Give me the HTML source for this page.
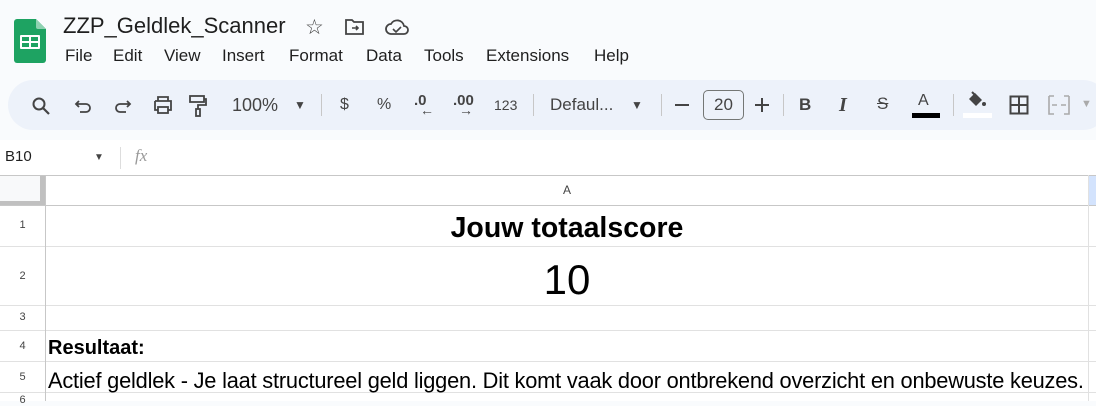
<!DOCTYPE html>
<html><head><meta charset="utf-8"><style>
*{margin:0;padding:0;box-sizing:border-box}
body{width:1096px;height:401px;overflow:hidden;background:#f9fbfd;font-family:"Liberation Sans",Arial,sans-serif;position:relative;color:#1f1f1f}
.abs{position:absolute}
.tb{position:absolute;left:8px;top:80px;width:1100px;height:50px;background:#edf2fa;border-radius:25px}
.ic{position:absolute;top:93px}
.sep{position:absolute;top:94px;width:1px;height:22px;background:#c7c7c7}
.t{position:absolute;font-size:16px;color:#444}
.grid{position:absolute;left:0;top:175px;width:1096px;height:226px;background:#fff}
.h{position:absolute;background:#e1e1e1;height:1px;left:0;width:1096px}
.rn{position:absolute;left:0;width:45px;text-align:center;font-size:11px;color:#444}
.cell{position:absolute;left:48px;font-family:"Liberation Sans",sans-serif;color:#000}
</style></head><body>
<svg class="abs" style="left:14px;top:19px" width="32" height="44" viewBox="0 0 32 44">
<path d="M3 0h19l10 10v31a3 3 0 0 1-3 3H3a3 3 0 0 1-3-3V3a3 3 0 0 1 3-3z" fill="#1ea362"/>
<path d="M22 0v8a2 2 0 0 0 2 2h8z" fill="#8ed1b1"/>
<rect x="6" y="16" width="20" height="14" rx="1" fill="#fff"/>
<rect x="8" y="18" width="7" height="4" fill="#1ea362"/><rect x="17" y="18" width="7" height="4" fill="#1ea362"/>
<rect x="8" y="24" width="7" height="4" fill="#1ea362"/><rect x="17" y="24" width="7" height="4" fill="#1ea362"/>
</svg>
<div class="abs" style="left:63px;top:13px;font-size:22px;color:#1f1f1f">ZZP_Geldlek_Scanner</div>
<div class="abs" style="left:305px;top:15px;font-size:21px;color:#444">☆</div>
<svg class="abs" style="left:345px;top:19px" width="20" height="16" viewBox="0 0 20 16"><path d="M1 1h6l2 2h9v12H1z" fill="none" stroke="#444" stroke-width="1.8"/><path d="M7 9h6M11 7l2 2-2 2" fill="none" stroke="#444" stroke-width="1.6"/></svg>
<svg class="abs" style="left:385px;top:18px" width="24" height="18" viewBox="0 0 24 18"><path d="M6 16a5 5 0 0 1 0-10 7 7 0 0 1 13 2 4 4 0 0 1 0 8z" fill="none" stroke="#444" stroke-width="1.8"/><path d="M8 11l3 3 5-5" fill="none" stroke="#444" stroke-width="1.6"/></svg>
<div class="abs" style="left:65px;top:46px;font-size:17px;color:#1f1f1f">
<span style="position:absolute;left:0">File</span><span style="position:absolute;left:48px">Edit</span><span style="position:absolute;left:99px">View</span><span style="position:absolute;left:157px">Insert</span><span style="position:absolute;left:224px">Format</span><span style="position:absolute;left:301px">Data</span><span style="position:absolute;left:359px">Tools</span><span style="position:absolute;left:421px;white-space:nowrap">Extensions</span><span style="position:absolute;left:529px">Help</span></div>
<div class="tb"></div>
<svg class="ic" style="left:31px;top:96px" width="20" height="20" viewBox="0 0 20 20"><circle cx="8" cy="8" r="5.5" fill="none" stroke="#444" stroke-width="2"/><path d="M12 12l6 6" stroke="#444" stroke-width="2.2"/></svg>
<svg class="ic" style="left:74px;top:96px" width="20" height="20" viewBox="0 0 20 20"><path d="M5 5L2 8l3 3M2 8h10a4 4 0 0 1 0 8H6" fill="none" stroke="#444" stroke-width="1.8"/></svg>
<svg class="ic" style="left:112px;top:96px" width="20" height="20" viewBox="0 0 20 20"><path d="M15 5l3 3-3 3M18 8H8a4 4 0 0 0 0 8h6" fill="none" stroke="#444" stroke-width="1.8"/></svg>
<svg class="ic" style="left:152px;top:95px" width="22" height="20" viewBox="0 0 22 20"><path d="M6 6V2h10v4M3 6h16v9h-3M6 15H3V6" fill="none" stroke="#444" stroke-width="1.8"/><rect x="6" y="12" width="10" height="6" fill="none" stroke="#444" stroke-width="1.8"/></svg>
<svg class="ic" style="left:188px;top:94px" width="20" height="24" viewBox="0 0 20 24"><rect x="2" y="2" width="14" height="6" fill="none" stroke="#444" stroke-width="1.8"/><path d="M16 5h2v6H10v4" fill="none" stroke="#444" stroke-width="1.8"/><rect x="8" y="15" width="4" height="7" fill="none" stroke="#444" stroke-width="1.8"/></svg>
<div class="t" style="left:232px;top:95px;font-size:18px">100%</div>
<div class="t" style="left:294px;top:98px;font-size:12px">▼</div>
<div class="sep" style="left:321px"></div>
<div class="t" style="left:340px;top:96px">$</div>
<div class="t" style="left:377px;top:96px">%</div>
<div class="t" style="left:414px;top:92px;font-weight:bold;font-size:15px">.0</div><div class="t" style="left:420px;top:102px;font-size:14px;font-weight:bold">←</div>
<div class="t" style="left:453px;top:92px;font-weight:bold;font-size:15px">.00</div><div class="t" style="left:459px;top:102px;font-size:14px;font-weight:bold">→</div>
<div class="t" style="left:494px;top:97px;font-size:14px">123</div>
<div class="sep" style="left:533px"></div>
<div class="t" style="left:550px;top:95px;font-size:17px">Defaul...</div>
<div class="t" style="left:631px;top:98px;font-size:12px">▼</div>
<div class="sep" style="left:661px"></div>
<div class="abs" style="left:675px;top:104px;width:14px;height:2px;background:#444"></div>
<div class="abs" style="left:703px;top:90px;width:41px;height:30px;border:1px solid #747775;border-radius:5px;font-size:17px;color:#444;text-align:center;line-height:28px">20</div>
<div class="abs" style="left:755px;top:104px;width:14px;height:2px;background:#444"></div>
<div class="abs" style="left:761px;top:98px;width:2px;height:14px;background:#444"></div>
<div class="sep" style="left:783px"></div>
<div class="t" style="left:799px;top:95px;font-weight:bold;font-size:17px">B</div>
<div class="t" style="left:839px;top:94px;font-style:italic;font-family:'Liberation Serif',serif;font-weight:bold;font-size:20px">I</div>
<div class="t" style="left:877px;top:94px;font-size:17px;text-decoration:line-through">S</div>
<div class="t" style="left:918px;top:92px;font-size:16px">A</div>
<div class="abs" style="left:912px;top:113px;width:28px;height:5px;background:#000"></div>
<div class="sep" style="left:953px"></div>
<svg class="abs" style="left:966px;top:90px" width="22" height="20" viewBox="0 0 22 20"><path d="M3 9l6-6 7 7-6 6z" fill="#444"/><path d="M6 2l3 3" stroke="#444" stroke-width="2"/><circle cx="18" cy="14" r="2" fill="#444"/></svg>
<div class="abs" style="left:963px;top:113px;width:29px;height:5px;background:#fff"></div>
<svg class="abs" style="left:1009px;top:95px" width="20" height="20" viewBox="0 0 20 20"><rect x="1.5" y="1.5" width="17" height="17" fill="none" stroke="#444" stroke-width="2"/><path d="M10 2v16M2 10h16" stroke="#444" stroke-width="2"/></svg>
<svg class="abs" style="left:1048px;top:95px" width="22" height="20" viewBox="0 0 22 20"><path d="M1 1h5M1 1v18h5M21 1h-5M21 1v18h-5M4 10h5M13 10h5" fill="none" stroke="#aaa" stroke-width="1.6"/></svg>
<div class="t" style="left:1081px;top:98px;font-size:11px;color:#aaa">▼</div>
<div class="abs" style="left:0;top:140px;width:1096px;height:36px;background:#fff"></div>
<div class="abs" style="left:5px;top:148px;font-size:15px;color:#1f1f1f">B10</div>
<div class="abs" style="left:94px;top:152px;font-size:10px;color:#444">▼</div>
<div class="abs" style="left:120px;top:147px;width:1px;height:22px;background:#ddd"></div>
<div class="abs" style="left:135px;top:146px;font-size:17px;color:#999;font-style:italic;font-family:'Liberation Serif',serif">fx</div>
<div class="grid"></div>
<div class="abs" style="left:0;top:175px;width:1096px;height:31px;background:#fff"></div>
<div class="abs" style="left:0;top:175px;width:45px;height:31px;background:#f8f9fa"></div>
<div class="abs" style="left:40px;top:175px;width:5px;height:30px;background:#c0c0c0"></div>
<div class="abs" style="left:0;top:201px;width:45px;height:5px;background:#c0c0c0"></div>
<div class="abs" style="left:1089px;top:175px;width:7px;height:30px;background:#d3e3fd"></div>
<div class="h" style="top:175px;background:#c7c7c7"></div>
<div class="h" style="top:205px;background:#c7c7c7"></div>
<div class="h" style="top:246px"></div>
<div class="h" style="top:305px"></div>
<div class="h" style="top:330px"></div>
<div class="h" style="top:361px"></div>
<div class="h" style="top:392px"></div>
<div class="abs" style="left:45px;top:175px;width:1px;height:226px;background:#c7c7c7"></div>
<div class="abs" style="left:1088px;top:175px;width:1px;height:226px;background:#e1e1e1"></div>
<div class="abs" style="left:563px;top:183px;font-size:12px;color:#444">A</div>
<div class="rn" style="top:219px">1</div>
<div class="rn" style="top:270px">2</div>
<div class="rn" style="top:311px">3</div>
<div class="rn" style="top:340px">4</div>
<div class="rn" style="top:371px">5</div>
<div class="rn" style="top:394px">6</div>
<div class="abs" style="left:46px;top:212px;width:1042px;text-align:center;font-size:28.5px;font-weight:bold;color:#000">Jouw totaalscore</div>
<div class="abs" style="left:46px;top:256px;width:1042px;text-align:center;font-size:42px;color:#000">10</div>
<div class="cell" style="top:337px;font-size:20px;font-weight:bold">Resultaat:</div>
<div class="cell" style="top:368px;left:48px;font-size:21.8px;white-space:nowrap;letter-spacing:-0.2px">Actief geldlek - Je laat structureel geld liggen. Dit komt vaak door ontbrekend overzicht en onbewuste keuzes.</div>
</body></html>
